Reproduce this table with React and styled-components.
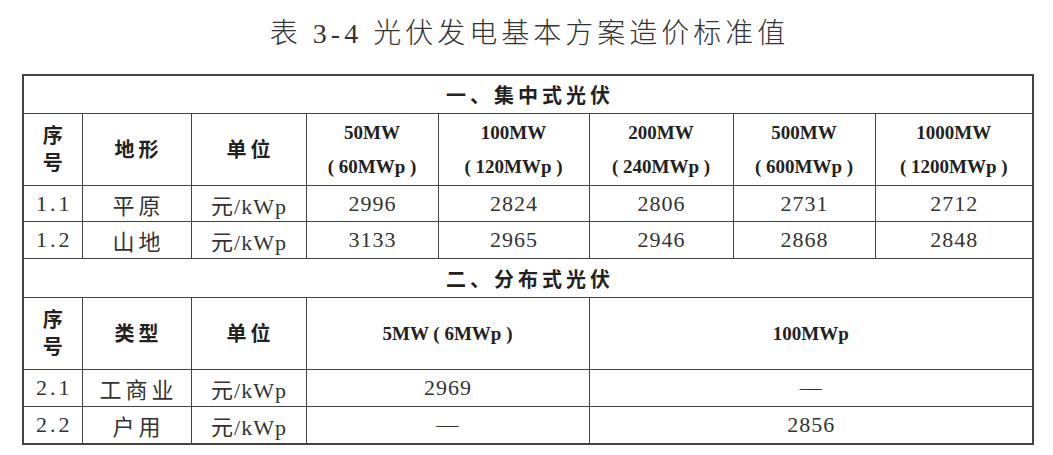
import React from 'react';
import styled, { createGlobalStyle } from 'styled-components';

const GlobalStyle = createGlobalStyle`
  html, body {
    margin: 0;
    padding: 0;
    background: #fff;
  }
  body {
    font-family: "Liberation Serif", "Noto Sans CJK SC", serif;
    color: #2a2a2a;
  }
`;

const Page = styled.div`
  width: 1053px;
  height: 455px;
  padding-top: 15px;
  box-sizing: border-box;
  background: #fff;
`;

const Title = styled.h1`
  margin: 0 0 21px;
  padding-left: 6px;
  text-align: center;
  font-family: "Liberation Serif", "Noto Sans CJK SC", serif;
  font-weight: 300;
  font-size: 28px;
  line-height: 38px;
  letter-spacing: 4px;
  color: #333;
`;

const Table = styled.table`
  margin-left: 22px;
  width: 1010px;
  table-layout: fixed;
  border-collapse: collapse;
  border: 2px solid #444;
`;

const SectionCell = styled.td`
  height: ${(p) => p.h}px;
  padding: 0 0 0 4px;
  border: 1px solid #444;
  text-align: center;
  font-family: "Noto Sans CJK SC", sans-serif;
  font-weight: 700;
  font-size: 20px;
  letter-spacing: 4px;
  color: #222;
`;

const HeadCell = styled.td`
  height: ${(p) => p.h || 71}px;
  padding: 0 0 0 ${(p) => (p.latin ? 0 : 4)}px;
  border: 1px solid #444;
  text-align: center;
  vertical-align: middle;
  font-family: "Liberation Serif", "Noto Sans CJK SC", serif;
  font-weight: 700;
  font-size: ${(p) => (p.latin ? 19 : 20)}px;
  line-height: ${(p) => p.lh || 34}px;
  letter-spacing: ${(p) => (p.latin ? 0 : 4)}px;
  color: #222;
`;

const Cell = styled.td`
  height: ${(p) => p.h}px;
  padding: 0 0 0 ${(p) => p.spacing || 1}px;
  border: 1px solid #444;
  text-align: center;
  vertical-align: middle;
  font-family: "Liberation Serif", "Noto Sans CJK SC", serif;
  font-size: 22px;
  letter-spacing: ${(p) => p.spacing || 1}px;
  color: #333;
`;

const Line = styled.div`
  white-space: pre;
`;

const widths = [59, 109, 115, 132, 151, 144, 142, 158];

const central = [
  { no: '1.1', name: '平原', vals: ['2996', '2824', '2806', '2731', '2712'], h: 35 },
  { no: '1.2', name: '山地', vals: ['3133', '2965', '2946', '2868', '2848'], h: 36 },
];

const capacities = [
  ['50MW', '( 60MWp )'],
  ['100MW', '( 120MWp )'],
  ['200MW', '( 240MWp )'],
  ['500MW', '( 600MWp )'],
  ['1000MW', '( 1200MWp )'],
];

const distributed = [
  { no: '2.1', name: '工商业', a: '2969', b: '—', h: 36 },
  { no: '2.2', name: '户用', a: '—', b: '2856', h: 36 },
];

const SeqHead = () => (
  <HeadCell lh={27}>
    <Line>序</Line>
    <Line>号</Line>
  </HeadCell>
);

const LeadCells = ({ row }) => (
  <>
    <Cell h={row.h} spacing={3}>{row.no}</Cell>
    <Cell h={row.h} spacing={4}>{row.name}</Cell>
    <Cell h={row.h} spacing={1}>元/kWp</Cell>
  </>
);

export default function App() {
  return (
    <Page>
      <GlobalStyle />
      <Title>表 3-4 光伏发电基本方案造价标准值</Title>
      <Table>
        <colgroup>
          {widths.map((w, i) => (
            <col key={i} style={{ width: w }} />
          ))}
        </colgroup>
        <tbody>
          <tr>
            <SectionCell colSpan={8} h={37}>一、集中式光伏</SectionCell>
          </tr>
          <tr>
            <SeqHead />
            <HeadCell>地形</HeadCell>
            <HeadCell>单位</HeadCell>
            {capacities.map(([top, bottom]) => (
              <HeadCell key={top} latin>
                <Line>{top}</Line>
                <Line>{bottom}</Line>
              </HeadCell>
            ))}
          </tr>
          {central.map((row) => (
            <tr key={row.no}>
              <LeadCells row={row} />
              {row.vals.map((v, i) => (
                <Cell key={i} h={row.h}>{v}</Cell>
              ))}
            </tr>
          ))}
          <tr>
            <SectionCell colSpan={8} h={38}>二、分布式光伏</SectionCell>
          </tr>
          <tr>
            <SeqHead />
            <HeadCell>类型</HeadCell>
            <HeadCell>单位</HeadCell>
            <HeadCell colSpan={2} latin>
              <Line>5MW ( 6MWp )</Line>
            </HeadCell>
            <HeadCell colSpan={3} latin>100MWp</HeadCell>
          </tr>
          {distributed.map((row) => (
            <tr key={row.no}>
              <LeadCells row={row} />
              <Cell h={row.h} colSpan={2}>{row.a}</Cell>
              <Cell h={row.h} colSpan={3}>{row.b}</Cell>
            </tr>
          ))}
        </tbody>
      </Table>
    </Page>
  );
}
